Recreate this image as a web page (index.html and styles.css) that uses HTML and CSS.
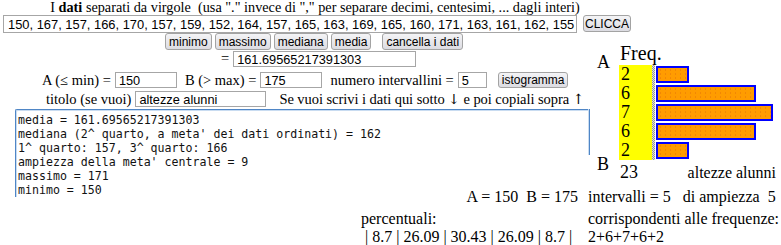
FILE: index.html
```html
<!DOCTYPE html>
<html lang="it">
<head>
    <meta charset="UTF-8">
    <title>Istogramma</title>
    <link rel="stylesheet" href="styles.css">
</head>
<body>
    <div class="head">
        <p class="intro">I <b>dati</b> separati da virgole&nbsp; (usa "." invece di "," per separare decimi, centesimi, ... dagli interi)</p>
        <div class="data-row">
            <input type="text" class="data-input" value="150, 167, 157, 166, 170, 157, 159, 152, 164, 157, 165, 163, 169, 165, 160, 171, 163, 161, 162, 155, 158, 162, 166">
            <button type="button" class="click-btn">CLICCA</button>
        </div>
    </div>

    <div class="main">
        <div class="left">
            <div class="stats-row">
                <button type="button">minimo</button>
                <button type="button">massimo</button>
                <button type="button">mediana</button>
                <button type="button">media</button>
                <button type="button" class="clear-btn">cancella i dati</button>
            </div>
            <div class="result-row">
                <span>=</span>
                <input type="text" class="result-input" value="161.69565217391303">
            </div>
            <div class="range-row">
                <span>A (≤ min) =</span>
                <input type="text" class="small-input" value="150">
                <span class="gap-label">B (&gt; max) =</span>
                <input type="text" class="small-input" value="175">
                <span class="gap-label">numero intervallini =</span>
                <input type="text" class="tiny-input" value="5">
                <button type="button" class="histo-btn">istogramma</button>
            </div>
            <div class="title-row">
                <span>titolo (se vuoi)</span>
                <input type="text" class="title-input" value="altezze alunni">
                <span class="hint">Se vuoi scrivi i dati qui sotto <span class="arrow">↓</span> e poi copiali sopra <span class="arrow">↑</span></span>
            </div>
            <pre class="notes">media = 161.69565217391303
mediana (2^ quarto, a meta' dei dati ordinati) = 162
1^ quarto: 157, 3^ quarto: 166
ampiezza della meta' centrale = 9
massimo = 171
minimo = 150</pre>
        </div>

        <div class="chart">
            <div class="axis">
                <span class="axis-a">A</span>
                <span class="axis-b">B</span>
            </div>
            <div class="plot">
                <div class="freq-head">Freq.</div>
                <div class="bars">
                    <div class="counts">
                        <div>2</div>
                        <div>6</div>
                        <div>7</div>
                        <div>6</div>
                        <div>2</div>
                    </div>
                    <div class="stripe"></div>
                    <div class="bar-list">
                        <div class="bar-row"><div class="bar" style="width: 33px"></div></div>
                        <div class="bar-row"><div class="bar" style="width: 100px"></div></div>
                        <div class="bar-row"><div class="bar" style="width: 117px"></div></div>
                        <div class="bar-row"><div class="bar" style="width: 100px"></div></div>
                        <div class="bar-row"><div class="bar" style="width: 33px"></div></div>
                    </div>
                </div>
                <div class="plot-foot">
                    <span class="total">23</span>
                    <span class="plot-title">altezze alunni</span>
                </div>
            </div>
        </div>
    </div>

    <div class="summary">
        <div class="bounds">A = 150&nbsp; B = 175</div>
        <div>intervalli = 5 &nbsp; di ampiezza &nbsp;5</div>
        <div class="perc">
            <div>percentuali:</div>
            <div class="perc-values">| 8.7 | 26.09 | 30.43 | 26.09 | 8.7 |</div>
        </div>
        <div>
            <div>corrispondenti alle frequenze:</div>
            <div>2+6+7+6+2</div>
        </div>
    </div>
</body>
</html>
```

FILE: styles.css
```css
* {
    margin: 0;
    padding: 0;
    box-sizing: border-box;
}

body {
    font-family: 'Liberation Serif', 'Times New Roman', serif;
    font-size: 16px;
    color: #000;
    background: #fff;
    width: 781px;
    height: 245px;
    overflow: hidden;
}

input, button {
    font-family: 'Liberation Sans', Arial, sans-serif;
    font-size: 12.75px;
    color: #000;
}

input {
    height: 16px;
    padding: 1px 3px 0;
    border: 1px solid #a6a6a6;
    background: #fff;
}

button {
    height: 17px;
    padding: 0 3px;
    font-size: 12px;
    border: 1px solid #a3a3a3;
    border-radius: 3px;
    background: linear-gradient(#f4f4f6, #dcdce2);
    flex-shrink: 0;
}

/* top: data line */
.head {
    width: 660px;
}

.intro {
    width: 630px;
    font-size: 14.25px;
    line-height: 15px;
    height: 15px;
    text-align: center;
}

.data-row {
    display: flex;
    gap: 6px;
    padding-left: 3px;
    height: 18px;
}

.data-input {
    width: 574px;
    height: 18px;
    padding: 0 1px 0 4px;
    font-size: 12.9px;
    flex-shrink: 0;
}

.click-btn {
    padding: 0 1px;
}

/* left column */
.main {
    display: flex;
    align-items: flex-start;
}

.left {
    width: 597px;
    font-size: 14.5px;
}

.stats-row {
    display: flex;
    gap: 3px;
    padding-left: 165px;
    height: 17px;
}

.clear-btn {
    margin-left: 8px;
}

.result-row {
    display: flex;
    align-items: center;
    gap: 4px;
    padding-left: 221px;
    height: 17px;
}

.result-input {
    width: 183px;
}

.range-row {
    display: flex;
    align-items: center;
    gap: 4px;
    padding-left: 42px;
    margin-top: 5px;
    height: 16px;
}

.gap-label {
    margin-left: 4px;
}

.small-input {
    width: 62px;
}

.tiny-input {
    width: 29px;
}

.histo-btn {
    margin-left: 7px;
    height: 16px;
}

.title-row {
    display: flex;
    align-items: center;
    gap: 4px;
    padding-left: 46px;
    margin-top: 3px;
    height: 16px;
}

.title-input {
    width: 131px;
}

.hint {
    margin-left: 9px;
    letter-spacing: -0.05px;
}

.arrow {
    font-family: 'DejaVu Serif', serif;
    font-size: 14px;
}

.notes {
    position: relative;
    margin: 2px 0 -9px 15px;
    width: 575px;
    height: 88px;
    padding: 3px 2px;
    border-top: 1px solid #4f86c6;
    border-left: 1px solid #4f86c6;
    border-top-left-radius: 2px;
    box-shadow: inset 1px 1px 0 #c9dcf1;
    font-family: 'DejaVu Sans Mono', monospace;
    font-size: 11.6px;
    line-height: 14px;
    color: #111;
}

.notes::after {
    content: "";
    position: absolute;
    top: -1px;
    right: 0;
    width: 1px;
    height: 46px;
    background: #4f86c6;
    box-shadow: -1px 0 0 #c9dcf1;
}

/* histogram */
.chart {
    display: flex;
}

.axis {
    width: 22px;
    display: flex;
    flex-direction: column;
    font-size: 18px;
    line-height: 20px;
    padding-top: 19px;
}

.axis-b {
    margin-top: 82px;
}

.freq-head {
    height: 32px;
    padding: 10px 0 0 1px;
    font-size: 20px;
    line-height: 20px;
}

.bars {
    display: flex;
}

.counts {
    width: 33px;
    background: #ffff00;
    font-size: 18px;
    line-height: 19px;
    padding-left: 2px;
}

.stripe {
    width: 3px;
    background: repeating-conic-gradient(#9a9a9a 0 25%, #dedede 0 50%) 0 0 / 2px 2px;
}

.bar-list {
    padding-left: 1px;
}

.bar-row {
    height: 19px;
    padding-top: 1px;
}

.bar {
    height: 17px;
    border: 2px solid #0000ff;
    background-color: #ff9c00;
    background-image: radial-gradient(#e8780a 0.5px, transparent 0.8px);
    background-size: 5px 4px;
}

.plot-foot {
    display: flex;
    align-items: baseline;
    justify-content: space-between;
    width: 162px;
    margin-top: 2px;
    padding-right: 5px;
    line-height: 20px;
}

.total {
    font-size: 18px;
    padding-left: 1px;
}

/* bottom */
.summary {
    display: grid;
    grid-template-columns: 588px 1fr;
    grid-template-rows: 22px auto;
    line-height: 18px;
}

.bounds {
    text-align: right;
    padding-right: 10px;
}

.perc {
    padding-left: 361px;
}

.perc-values {
    padding-left: 4px;
}
```
